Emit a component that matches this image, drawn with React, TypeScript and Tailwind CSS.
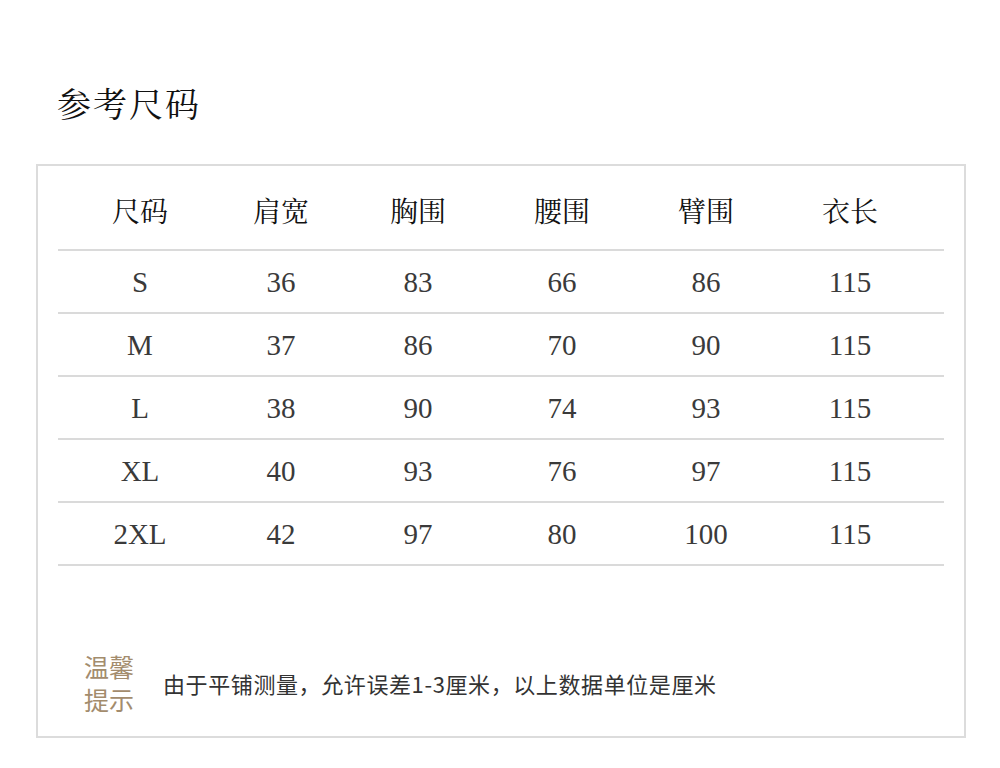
import React from "react";

const headers = ["尺码", "肩宽", "胸围", "腰围", "臂围", "衣长"];
const rows = [
  ["S", "36", "83", "66", "86", "115"],
  ["M", "37", "86", "70", "90", "115"],
  ["L", "38", "90", "74", "93", "115"],
  ["XL", "40", "93", "76", "97", "115"],
  ["2XL", "42", "97", "80", "100", "115"],
];

const cjkSerif = { fontFamily: '"Noto Serif CJK SC", "Noto Sans CJK SC", serif' };

export default function App() {
  return (
    <div className="w-[1000px] h-[768px] bg-white relative overflow-hidden">
      <div className="pt-[80px] pl-[57px] h-[164px]">
        <h1
          className="text-[34px] leading-[46px] text-[#111] font-normal tracking-[2px]"
          style={cjkSerif}
        >
          参考尺码
        </h1>
      </div>
      <div className="ml-[36px] w-[930px] h-[574px] border-2 border-[#dcdcdc] flex flex-col">
        <div className="ml-[20px] w-[886px]">
          <div className="grid grid-cols-[164px_118px_156px_132px_156px_132px] h-[85px] items-center border-b-2 border-[#dadada]">
            {headers.map((h) => (
              <div
                key={h}
                className="text-center text-[28px] text-[#111] pt-[4px]"
                style={cjkSerif}
              >
                {h}
              </div>
            ))}
          </div>
          {rows.map((r, i) => (
            <div
              key={i}
              className="grid grid-cols-[164px_118px_156px_132px_156px_132px] h-[63px] items-center border-b-2 border-[#dadada]"
            >
              {r.map((c, j) => (
                <div
                  key={j}
                  className="text-center text-[29px] text-[#3a3a3a] pt-[2px]"
                  style={{ fontFamily: '"Liberation Serif", serif' }}
                >
                  {c}
                </div>
              ))}
            </div>
          ))}
        </div>
        <div className="flex items-center ml-[46px] mt-[84px]">
          <div
            className="text-[25px] leading-[33px] text-[#a38c6d] w-[54px]"
            style={{ fontFamily: '"Noto Sans CJK SC", sans-serif' }}
          >
            <div>温馨</div>
            <div>提示</div>
          </div>
          <div
            className="ml-[25px] text-[22px] text-[#333] tracking-[0.6px]"
            style={{ fontFamily: '"Noto Sans CJK SC", sans-serif' }}
          >
            由于平铺测量，允许误差1-3厘米，以上数据单位是厘米
          </div>
        </div>
      </div>
    </div>
  );
}
